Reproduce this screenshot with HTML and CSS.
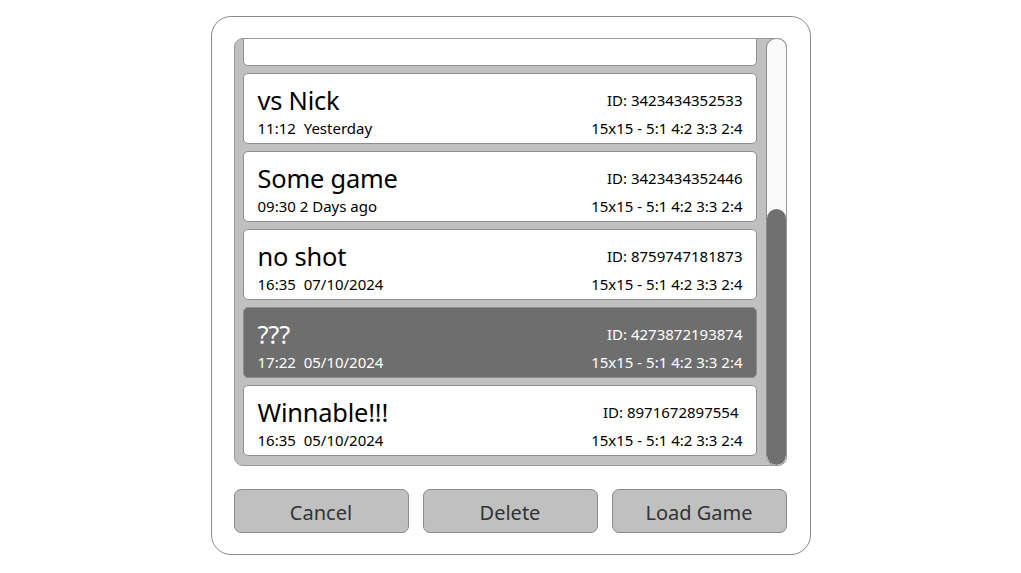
FILE: index.html
```html
<!DOCTYPE html>
<html lang="en">
<head>
<meta charset="utf-8">
<title>Load Game</title>
<link rel="stylesheet" href="styles.css">
</head>
<body>
<div class="dialog">
  <div class="listwrap">
    <div class="list">
      <div class="items">
        <div class="item"></div>
        <div class="item">
          <div class="row top"><span class="title">vs Nick</span><span class="id">ID: 3423434352533</span></div>
          <div class="row sub"><span>11:12&nbsp; Yesterday</span><span>15x15 - 5:1 4:2 3:3 2:4</span></div>
        </div>
        <div class="item">
          <div class="row top"><span class="title">Some game</span><span class="id">ID: 3423434352446</span></div>
          <div class="row sub"><span>09:30 2 Days ago</span><span>15x15 - 5:1 4:2 3:3 2:4</span></div>
        </div>
        <div class="item">
          <div class="row top"><span class="title">no shot</span><span class="id">ID: 8759747181873</span></div>
          <div class="row sub"><span>16:35&nbsp; 07/10/2024</span><span>15x15 - 5:1 4:2 3:3 2:4</span></div>
        </div>
        <div class="item selected">
          <div class="row top"><span class="title">???</span><span class="id">ID: 4273872193874</span></div>
          <div class="row sub"><span>17:22&nbsp; 05/10/2024</span><span>15x15 - 5:1 4:2 3:3 2:4</span></div>
        </div>
        <div class="item">
          <div class="row top"><span class="title">Winnable!!!</span><span class="id shift">ID: 8971672897554</span></div>
          <div class="row sub"><span>16:35&nbsp; 05/10/2024</span><span>15x15 - 5:1 4:2 3:3 2:4</span></div>
        </div>
      </div>
    </div>
    <div class="scrollbar"><div class="thumb"></div></div>
  </div>
  <div class="buttons">
    <button class="btn">Cancel</button>
    <button class="btn">Delete</button>
    <button class="btn">Load Game</button>
  </div>
</div>
</body>
</html>
```
FILE: styles.css
```css
* { box-sizing: border-box; }
html, body { margin: 0; padding: 0; background: #fff; }
body {
  font-family: "Noto Sans", "Open Sans", sans-serif;
  color: #000;
  display: flex;
  justify-content: center;
}
.dialog {
  margin-top: 16px;
  width: 600px;
  height: 539px;
  border: 1px solid #8a8a8a;
  border-radius: 20px;
  padding: 21px 23px 0 22px;
  display: flex;
  flex-direction: column;
}
.listwrap {
  position: relative;
  height: 428px;
  background: #c0c0c0;
  border: 1px solid #999;
  border-radius: 9px;
  overflow: hidden;
  display: flex;
}
.list {
  flex: 1;
  overflow: hidden;
  padding: 0 9px 0 8px;
}
.items {
  display: flex;
  flex-direction: column;
  gap: 7px;
  margin-top: -44px;
}
.item {
  height: 71px;
  flex: none;
  background: #fff;
  border: 1px solid #8f8f8f;
  border-radius: 5px;
  padding: 9px 13px 0 14px;
}
.item.selected {
  background: #6e6e6e;
  color: #fff;
}
.row {
  display: flex;
  justify-content: space-between;
  align-items: center;
}
.row.top { height: 34px; }
.row.sub { height: 20px; margin-top: 1px; font-size: 15px; white-space: pre; }
.title { font-size: 25.4px; letter-spacing: -0.2px; }
.id { font-size: 15px; }
.id.shift { margin-right: 4px; }
.scrollbar {
  width: 21px;
  margin: -1px -1px -1px 0;
  background: #fafafa;
  border: 1px solid #8a8a8a;
  border-radius: 10px;
  position: relative;
  overflow: hidden;
}
.thumb {
  position: absolute;
  left: 0;
  right: 0;
  top: 170px;
  bottom: 0;
  background: #707070;
  border-radius: 10px;
}
.buttons {
  display: flex;
  justify-content: space-between;
  margin-top: 23px;
}
.btn {
  width: 175px;
  height: 44px;
  background: #c0c0c0;
  border: 1px solid #8a8a8a;
  border-radius: 7px;
  font-family: "Noto Sans", "Open Sans", sans-serif;
  font-size: 20px;
  color: #333;
  padding: 3px 0 0 0;
}
```
